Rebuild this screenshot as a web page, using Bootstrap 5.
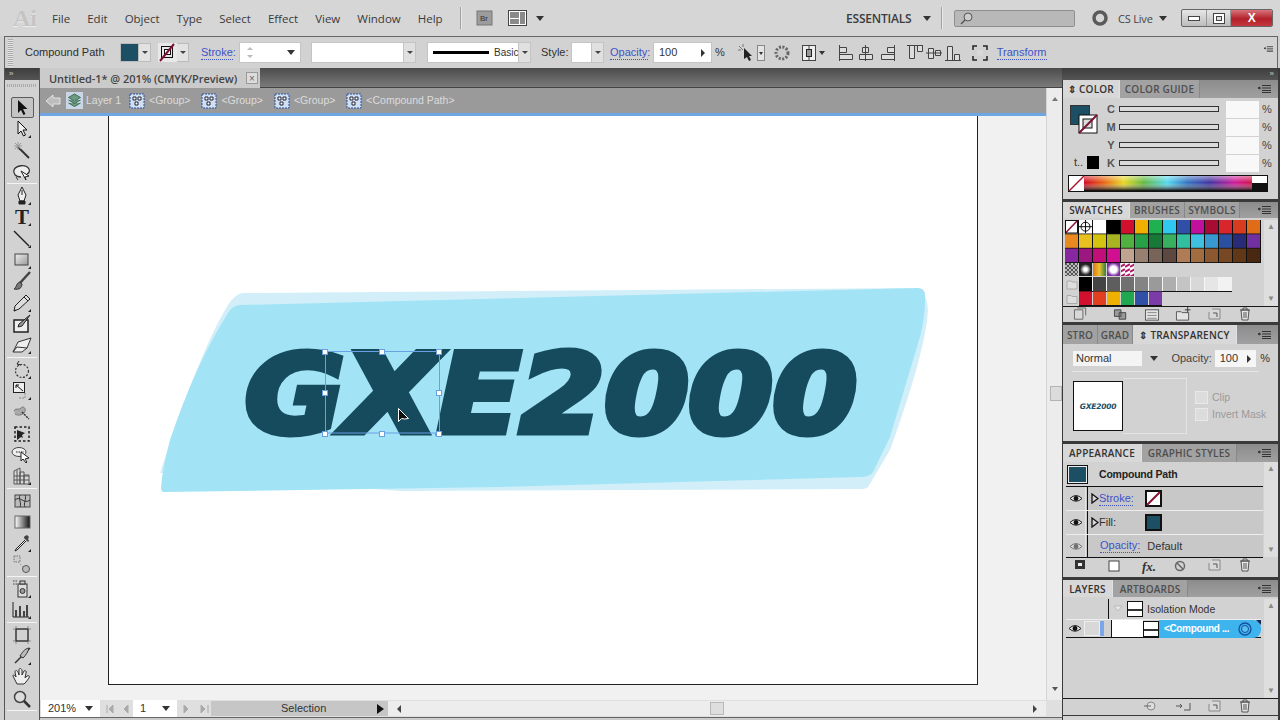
<!DOCTYPE html>
<html lang="en"><head><meta charset="utf-8"><title>Illustrator</title>
<link rel="stylesheet" href="https://cdn.jsdelivr.net/npm/bootstrap@5.3.0/dist/css/bootstrap.min.css">
<style>
html,body{margin:0;width:1280px;height:720px;overflow:hidden;background:#d0d0d0}
body{font:11px "Liberation Sans",sans-serif;color:#333;line-height:1}
svg{display:block;flex:none}
.app{width:1280px;height:720px}
.menubar{height:36px;background:#d6d6d6;padding:0 7px 0 0;flex:none}
.ailogo{font:700 24px "Liberation Serif",serif;color:#c4c4c4;width:52px;padding-left:13px;text-shadow:0 1px 0 #eee}
.mitem{font:11.5px "Open Sans",sans-serif;color:#3a3a3a;margin-right:17px}
.vsep{width:1px;height:22px;background:#a2a2a2;border-right:1px solid #e8e8e8;box-sizing:content-box}
.ess{font:600 12px "Open Sans",sans-serif;color:#3c3c3c;width:77px;white-space:nowrap;letter-spacing:-.2px}
.caret-d{width:0;height:0;border-left:4px solid transparent;border-right:4px solid transparent;border-top:5px solid #333;flex:none}
.srch{width:121px;height:17px;margin:0 17px 0 11px;background:#b8b8b8;border:1px solid #8e8e8e;border-radius:2px;padding-left:5px}
.cslive{font:11px "Open Sans",sans-serif;color:#444;margin:0 4px 0 10px;width:37px;white-space:nowrap;letter-spacing:-.2px}
.winbtns{width:92px;height:18px;margin-left:14px;border:1px solid #666;border-radius:2px;background:linear-gradient(#e6e6e6,#bcbcbc);overflow:hidden}
.wb{width:25px;height:100%;border-right:1px solid #999}
.wbx{width:41px;height:100%;background:linear-gradient(#d8737b,#b3212a 55%,#c4383f);color:#fff;font:700 12px "Liberation Sans",sans-serif}
.ctrlbar{height:32px;flex:none;margin:0 2px 0 4px;background:#d2d2d2;border:1px solid #666;border-width:1px 1px 0 1px;padding-left:3px}
.grip{width:5px;height:28px;background:repeating-linear-gradient(#aaa 0 1px,#e4e4e4 1px 2px)}
.cpath{margin-left:12px;width:95px;color:#2e2e2e}
.swfill{width:19px;height:19px;background:#1c4f63;border:1px solid #bcbcbc}
.swbtn{width:12px;height:19px;background:#e2e2e2;border:1px solid #bbb;border-left:0;margin-right:7px}
.mini-c{width:0;height:0;border-left:3px solid transparent;border-right:3px solid transparent;border-top:3px solid #444}
.lnk{color:#4053c8;border-bottom:1px dotted #4053c8;line-height:13px;white-space:nowrap}
.fld{height:21px;background:#fff;border:1px solid #c4c4c4;color:#333;padding:0 5px;flex:none}
.fldb{width:12px;height:100%;background:#e0e0e0;border-left:1px solid #c4c4c4;margin-left:auto;margin-right:-5px}
.f62{width:62px}.f105{width:105px}.f104{width:104px}.f33{width:33px}.f59{width:59px}.f44{width:44px}
.basic{font-size:10px;margin-left:5px}
.ctl-stroke{margin-left:5px;width:32px}.ctl-style{margin-left:10px;width:26px}.ctl-op{margin-left:6px;width:38px}
.ml3{margin-left:3px}.ml4{margin-left:4px}.ml5{margin-left:5px}.ml6{margin-left:6px}.ml8{margin-left:8px}.ml10{margin-left:10px}.ml11{margin-left:11px}.ml12{margin-left:12px}
.work{height:652px;min-height:0}
.toolcol{flex:none;background:#d2d2d2;border-left:1px solid #555;border-right:1px solid #555;margin-left:4px;width:36px}
.tophd{height:12px;background:linear-gradient(#3d3d3d,#555);color:#ccc;font-size:8px;padding:0 4px}
.tgrip{height:17px;padding:4px 2px 0}
.tgrip i{display:block;height:3px;background:repeating-linear-gradient(90deg,#aaa 0 1px,transparent 1px 2px)}
.tool{height:21.33px;width:100%}
.tact{width:23px;height:21px;border:1px solid #5c5c5c;border-radius:2px;background:#c4c4c4}
.tglyph{font:700 21px "Liberation Serif",serif;color:#222}
.tdiv{height:3px;padding-top:1px}
.tdiv i{display:block;height:1px;background:#f4f4f4;margin:0 2px}
.docarea{width:1022px;flex:none}
.tabrow{height:20px;background:linear-gradient(#4c4c4c,#7a7a7a);border-bottom:1px solid #444;flex:none}
.doctab{width:220px;height:20px;background:#cbcbcb;padding-left:9px;font:600 11px "Open Sans",sans-serif;color:#444;white-space:nowrap;letter-spacing:-.05px}
.docx{width:12px;height:12px;border:1px solid #999;margin-left:auto;margin-right:2px;color:#666;font:10px "Liberation Sans",sans-serif;background:#ddd}
.midrow{height:612px;flex:none}
.isobar{height:28px;background:#9a9a9a;border-bottom:3px solid #6ea6e4;color:#dcdcdc;padding-left:5px;flex:none;font-size:10.5px}
.crumb{margin-left:11px;white-space:nowrap}
.crumb svg{margin-right:4px}
.crumb1{margin-left:5px;width:52px;flex:none}
.crumb1 svg{margin-right:3px}
.canvasz{height:584px;background:#f1f1f1;flex:none}
.artb{width:870px;height:569px;margin-left:68px;background:#fff;border:1px solid #222;border-top:0}
.overlay{position:absolute;left:0;top:0}
.vscroll{width:16px;flex:none;background:#ececec;border-left:1px solid #d4d4d4}
.vthumb{width:12px;height:15px;margin:284px 0 0 2px;background:#dcdcdc;border:1px solid #b4b4b4}
.statusb{height:17px;background:#dfdfdf;flex:none}
.stf{height:17px;background:#fff;padding:0 7px;flex:none}
.stz{width:59px;margin-left:1px}.stp{width:44px;margin-left:1px}
.selbox{width:177px;height:15px;background:#c6c6c6;margin-left:1px;color:#333;padding-left:70px;flex:none}
.hbar{background:#ededed;height:15px;margin-right:16px}
.hthumb{width:14px;height:13px;background:#dedede;border:1px solid #b8b8b8}
.botline{height:3px;background:#cbcbcb;border-top:1px solid #666;flex:none}
.dock{width:218px;flex:none;background:#3a3a3a;padding-right:2px}
.dhead{height:12px;background:linear-gradient(#3d3d3d,#555);color:#ccc;font-size:8px;padding-right:4px;flex:none}
.dockend{flex:1;background:#d4d4d4;margin:1px 0 0 1px}
.pnl{background:#d2d2d2;margin-left:1px;flex:none;margin-bottom:3px;overflow:hidden}
.ptabs{background:linear-gradient(#8c8c8c,#a0a0a0);flex-wrap:nowrap;border:0;padding-right:7px}
.ptabs .nav-link{border:0;border-radius:0;padding:0;margin:0;height:100%;display:flex;align-items:center;justify-content:center;background:#a2a2a2;color:#4e4e4e;font:600 10px "Open Sans",sans-serif;letter-spacing:.2px;border-right:1px solid #888;white-space:nowrap;overflow:hidden}
.ptabs .nav-link.active{background:#d8d8d8;color:#333}
.h18{height:18px}.h16{height:16px}.h19{height:19px}.h17{height:17px}
.w57{width:57px}.w80{width:80px}.w67{width:67px}.w55{width:55px}.w35{width:35px}.w104{width:104px}.w79{width:79px}.w95{width:95px}.w50{width:50px}.w75{width:75px}
.pmenu{margin-left:auto}
.body-color{height:101px;padding:7px 0 0 7px;position:relative}
.cswatch{width:36px;height:64px;flex:none}
.kbox{width:12px;height:13px;background:#000;display:block}
.slcol{margin-top:-5px}
.sl{height:18px;color:#666;font-size:11px}
.sl b{font-weight:700;width:10px;margin-right:3px;text-align:center;color:#555}
.slbar{width:100px;height:6px;border:1px solid #333;background:#dadada}
.slin{width:33px;height:17px;background:#f8f8f8;margin:0 3px 0 7px}
.pct{color:#444}
.specbar{position:absolute;left:5px;top:77px}
.body-sw{height:88px;padding:2px 0 0 2px}
.sbar{width:14px;margin-left:auto;background:#dedede;color:#888;font-size:8px;padding:3px 0}
.pfoot{height:16px;border-top:1px solid #1a1a1a;padding:0;position:relative}
.pf19{height:19px;border-top:0}.pf17{height:17px}
.body-tr{height:97px;padding:6px 8px 0 10px}
.blend{width:74px;height:15px;background:#f4f4f4;padding-left:3px;color:#333}
.oplab{margin-left:13px;color:#444}
.trin{width:44px;height:17px;background:#f6f6f6;margin:0 4px 0 3px;padding-left:5px}
.trsep{height:1px;background:#e6e6e6;margin:4px 0 0 -1px;width:187px}
.trbox{margin-top:6px}
.thumbb{width:50px;height:50px;margin-top:3px;background:#fff;border:1px solid #111;color:#1c4f63;font:italic 800 7.5px "DejaVu Sans",sans-serif;letter-spacing:-.2px}
.maskb{width:64px;height:56px;border:1px solid #e4e4e4;border-left:0}
.ckcol{padding-top:13px;white-space:nowrap;color:#9a9a9a;font-size:10.500px}
.ckb{width:13px;height:13px;background:#dcdcdc;border:1px solid #e8e8e8}
.apprhead{height:25px;border-bottom:1px solid #111;width:197px;margin-left:3px;font-weight:700;font-size:10.5px;letter-spacing:-.2px;color:#222}
.apsw{width:21px;height:19px;background:#1c4f63;border:1px solid #111;outline:1px solid #eee;outline-offset:-2px;margin:0 11px 0 1px}
.aprow{height:24px;width:197px;margin-left:3px;background:#c8c8c8;border-bottom:1px solid #ededed}
.aprowl{height:23px;border-bottom:1px solid #111}
.eyec{width:20px;height:100%;border-right:1px solid #e4e4e4;background:#d0d0d0;margin-right:1px}
.aprule{width:1px;height:100%;background:#111}
.apbox{width:17px;height:17px;border:2px solid #111;background:#1c4f63}
.tri{width:8px;height:11px;margin:0 0 0 3px}
.aplab{width:34px;flex:none;margin:0 12px 0 0}
.aplab2{margin:0 7px 0 12px}
.aps{height:95px}
.dim{opacity:.5}
.body-lay{height:101px;padding-top:2px}
.lrow1{height:20px;margin-left:3px;width:195px;font-size:10.5px}
.lcolbar{display:block;width:43px;height:100%;border-right:1px solid #111}
.lrow2{height:19px;margin-left:3px;width:195px;border-top:1px solid #eee;border-bottom:1px solid #111}
.leye{width:18px}
.lvis{display:block;width:16px;height:15px;background:#d8d8d8;border:1px solid #eee}
.lblue{display:block;width:4px;height:15px;background:#7aa7ea;margin-right:4px}
.lrule{display:block;height:17px;border-left:1px solid #111;margin-left:3px}
.lwhite{display:block;width:31px;height:17px;background:#fff}
.lthumb{width:16px;height:16px;background:#fff;border:1px solid #111;position:relative;flex:none}
.lthumb i{position:absolute;left:0;right:0;top:7px;height:2px;background:#333}
.lsel{background:#3db4ee;color:#fff;font-weight:700;font-size:10px;letter-spacing:-.35px;border-radius:0 8px 8px 0;height:18px;position:relative;flex:1;padding-left:5px;white-space:nowrap}
.lsel:after{content:"";position:absolute;right:0;top:0;border-top:5px solid #1a2b52;border-left:5px solid transparent}
.ic{position:absolute;top:0}
.ring{margin-left:9px}
.p10{left:10px}.p11{left:11px}.p45{left:45px}.p50{left:50px}.p79{left:79px;top:1px;font:italic 700 13px "Liberation Serif",serif}.p80{left:80px}.p81{left:81px}.p110{left:110px}.p112{left:112px}.p144{left:144px}.p175{left:175px}
</style></head><body>
<svg width="0" height="0" class="position-absolute"><defs>
<symbol id="menu" viewBox="0 0 13 8"><path d="M0 3l2-1v2zM4 .5h9M4 3h9M4 5.500h9M4 7.500h9" stroke="#333" fill="#333"/></symbol>
<symbol id="grp" viewBox="0 0 16 16"><rect x="1" y="1" width="14" height="14" fill="#cfe0f4" stroke="#2d4f9e" stroke-dasharray="2 1"/><path d="M4 4h3v3H4zM9 4h3v3H9zM6 9h3v3H6z" fill="#fff" stroke="#223"/></symbol>
<symbol id="eye" viewBox="0 0 14 9"><path d="M1 4.500Q7-1.500 13 4.500 7 10 1 4.500z" fill="#e6e6e6" stroke="#222"/><circle cx="7" cy="4.500" r="2.400" fill="#111"/></symbol>
<symbol id="trash" viewBox="0 0 14 14"><path d="M3 3h8l-1 10H4zM2 3h10M5 3V1h4v2M6 5v6M8 5v6" fill="#e6e6e6" stroke="#555"/></symbol>
<symbol id="newi" viewBox="0 0 14 14"><path d="M5 2h8v10H2V5" fill="#d8d8d8" stroke="#888"/><path d="M6 6h4v4" fill="none" stroke="#555"/></symbol>
</defs></svg>
<div class="app d-flex flex-column">
 <nav class="menubar d-flex align-items-center">
  <span class="ailogo">Ai</span>
  <span class="mitem">File</span><span class="mitem">Edit</span><span class="mitem">Object</span><span class="mitem">Type</span><span class="mitem">Select</span><span class="mitem">Effect</span><span class="mitem">View</span><span class="mitem">Window</span><span class="mitem">Help</span>
  <span class="vsep"></span>
  <svg class="ml12" width="22" height="16" viewBox="0 0 22 16"><rect x="3" y="1" width="15" height="14" fill="#9c9c9c" stroke="#777"/><text x="6" y="11" font-family="Liberation Sans" font-size="8" fill="#333">Br</text></svg>
  <svg class="ml12" width="20" height="16" viewBox="0 0 20 16"><rect x=".5" y=".5" width="18" height="15" fill="#fff" stroke="#444"/><path d="M2 2h9v6H2zM12 2h5v12h-5zM2 9h9v5H2z" fill="#8a8a8a"/></svg>
  <span class="caret-d ml8"></span>
  <span class="flex-grow-1"></span>
  <span class="ess">ESSENTIALS</span><span class="caret-d"></span>
  <span class="vsep ml10"></span>
  <div class="srch d-flex align-items-center"><svg width="13" height="13" viewBox="0 0 13 13"><circle cx="8" cy="5" r="4" fill="#ccc" stroke="#555"/><path d="M5 8l-4 4" stroke="#555" stroke-width="1.500"/></svg></div>
  <svg width="16" height="16" viewBox="0 0 16 16"><circle cx="8" cy="8" r="6" fill="none" stroke="#5a5a5a" stroke-width="3.500"/></svg>
  <span class="cslive">CS Live</span><span class="caret-d"></span>
  <div class="winbtns d-flex">
   <div class="wb d-flex align-items-end justify-content-center pb-1"><svg width="12" height="6" viewBox="0 0 12 6"><rect x=".5" y=".5" width="11" height="4" fill="#fff" stroke="#444"/></svg></div>
   <div class="wb d-flex align-items-center justify-content-center"><svg width="12" height="11" viewBox="0 0 12 11"><rect x=".5" y=".5" width="11" height="10" fill="#fff" stroke="#444"/><rect x="3.500" y="3.500" width="5" height="4" fill="#ddd" stroke="#444"/></svg></div>
   <div class="wbx d-flex align-items-center justify-content-center">X</div>
  </div>
 </nav>
 <div class="ctrlbar d-flex align-items-center">
  <span class="grip"></span><span class="cpath">Compound Path</span>
  <span class="swfill"></span><span class="swbtn d-flex align-items-center justify-content-center"><i class="mini-c"></i></span>
  <svg width="19" height="19" viewBox="0 0 19 19"><rect width="19" height="19" fill="#e8e8e8"/><rect x="3.500" y="3.500" width="11" height="11" fill="none" stroke="#111"/><rect x="6.500" y="6.500" width="6" height="5" fill="#fff" stroke="#111"/><path d="M2 18L16 1" stroke="#7c1030" stroke-width="2"/></svg>
  <span class="swbtn d-flex align-items-center justify-content-center"><i class="mini-c"></i></span>
  <span class="lnk ctl-stroke">Stroke:</span>
  <div class="fld f62 d-flex align-items-center ml6"><svg width="10" height="17" viewBox="0 0 10 17"><path d="M5 3l3 3H2zM5 14l3-3H2z" fill="#bbb"/></svg><span class="caret-d ms-auto"></span></div>
  <div class="fld f105 d-flex align-items-center ml10"><span class="fldb d-flex align-items-center justify-content-center"><i class="mini-c"></i></span></div>
  <div class="fld f104 d-flex align-items-center ml11"><svg width="56" height="3"><rect width="56" height="3" fill="#000"/></svg><span class="basic">Basic</span><span class="fldb d-flex align-items-center justify-content-center"><i class="mini-c"></i></span></div>
  <span class="ctl-style">Style:</span>
  <div class="fld f33 d-flex align-items-center ml4"><span class="fldb d-flex align-items-center justify-content-center"><i class="mini-c"></i></span></div>
  <span class="lnk ctl-op">Opacity:</span>
  <div class="fld f59 d-flex align-items-center ml5">100<svg class="ms-auto" width="6" height="8" viewBox="0 0 6 8"><path d="M1 0l4 4-4 4z" fill="#333"/></svg></div>
  <span class="ml3">%</span>
  <svg class="ml12" width="30" height="20" viewBox="0 0 30 20"><path d="M2 3l4 4M6 1v3M1 7h3" stroke="#777"/><path d="M7 5v11l3-2 2 4 2-1-2-4h3z" fill="#222"/><rect x="20.500" y="2.500" width="7" height="15" fill="#e4e4e4" stroke="#888"/><path d="M22 9l2 3 2-3z" fill="#333"/></svg>
  <svg class="ml6" width="18" height="18" viewBox="0 0 18 18"><circle cx="9" cy="9" r="6" fill="#ccc" stroke="#666" stroke-width="3" stroke-dasharray="2 1.500"/></svg>
  <svg class="ml10" width="26" height="20" viewBox="0 0 26 20"><rect x="1.500" y="2.500" width="13" height="15" fill="#eee" stroke="#444"/><path d="M8 3v14" stroke="#444"/><rect x="5.500" y="6.500" width="5" height="7" fill="#999" stroke="#222"/><path d="M18 8h6l-3 4z" fill="#333"/></svg>
  <svg class="ml12" width="56" height="18" viewBox="0 0 56 18"><g fill="#ddd" stroke="#444"><path d="M.5 1v16M.5 3.500h7v5h-7zM.5 10.500h13v5H.5z"/><path d="M26.500 1v16M23.500 3.500h6v5h-6zM20.500 10.500h13v5h-13z"/><path d="M55.500 1v16M48.500 3.500h7v5h-7zM42.500 10.500h13v5h-13z"/></g></svg>
  <svg class="ml12" width="56" height="18" viewBox="0 0 56 18"><g fill="#ddd" stroke="#444"><path d="M0 1.500h16M2.500 1.500v13h5v-13zM10.500 1.500v6h5v-6z"/><path d="M19 9h16M21.500 4.500v10h5v-10zM28.500 6.500v5h5v-5z"/><path d="M38 16.500h16M40.500 2.500v14h5v-14zM47.500 10.500v6h5v-6z"/></g></svg>
  <svg class="ml8" width="18" height="18" viewBox="0 0 18 18"><path d="M2 6V2h4M12 2h4v4M16 12v4h-4M6 16H2v-4" fill="none" stroke="#222" stroke-width="1.500"/><path d="M5 5h8v8H5z" fill="#d8d8d8" stroke="#ccc"/></svg>
  <span class="lnk ms-2">Transform</span>
  <span class="ms-auto me-1 align-self-start mt-2"><svg width="9" height="8"><use href="#menu"/></svg></span>
 </div>
 <div class="work d-flex">
  <aside class="toolcol d-flex flex-column">
   <div class="tophd d-flex align-items-center">&#187;</div>
   <div class="tgrip"><i></i></div>
   <div class="tool d-flex align-items-center justify-content-center"><div class="tact d-flex align-items-center justify-content-center"><svg width="14" height="17" viewBox="0 0 14 17"><path d="M3 1v13l3-3 2.500 5 2-1-2.500-5h4.500z" fill="#111"/></svg></div></div>
   <div class="tool d-flex align-items-center justify-content-center"><svg width="20" height="20" viewBox="0 0 20 20"><path d="M6 2v13l3-3 2.500 5 2-1-2.500-5h4z" fill="#eee" stroke="#111"/><path d="M16 19h3v-3z" fill="#222"/></svg></div>
   <div class="tool d-flex align-items-center justify-content-center"><svg width="20" height="20" viewBox="0 0 20 20"><path d="M6 7l11 11" stroke="#333" stroke-width="2"/><path d="M6 2v8M2 6h8M3 3l6 6M9 3L3 9" stroke="#999"/></svg></div>
   <div class="tool d-flex align-items-center justify-content-center"><svg width="20" height="20" viewBox="0 0 20 20"><path d="M9 15C3 15 1 11 2 8c2-5 12-6 15-1 1 2 0 4-2 5" fill="#eee" stroke="#333" stroke-width="1.300"/><path d="M9 9l8 5-4 1 1 3z" fill="#fff" stroke="#222"/><path d="M4 15l2 3" stroke="#333"/></svg></div>
   <div class="tdiv"><i></i></div>
   <div class="tool d-flex align-items-center justify-content-center"><svg width="20" height="20" viewBox="0 0 20 20"><path d="M10 1l4 8-2 6H8L6 9z" fill="#eee" stroke="#222"/><path d="M10 4v5M7 15h6v3H7z" fill="#222" stroke="#222"/><path d="M16 19h3v-3z" fill="#222"/></svg></div>
   <div class="tool d-flex align-items-center justify-content-center position-relative"><span class="tglyph">T</span><svg class="position-absolute" width="20" height="20" viewBox="0 0 20 20"><path d="M16 19h3v-3z" fill="#222"/></svg></div>
   <div class="tool d-flex align-items-center justify-content-center"><svg width="20" height="20" viewBox="0 0 20 20"><path d="M2 2l15 15" stroke="#222" stroke-width="1.400"/><path d="M16 19h3v-3z" fill="#222"/></svg></div>
   <div class="tool d-flex align-items-center justify-content-center"><svg width="20" height="20" viewBox="0 0 20 20"><defs><linearGradient id="g1" x1="0" y1="0" x2="1" y2="1"><stop offset="0" stop-color="#eee"/><stop offset="1" stop-color="#999"/></linearGradient></defs><rect x="3" y="4" width="13" height="11" fill="url(#g1)" stroke="#444"/><path d="M16 19h3v-3z" fill="#222"/></svg></div>
   <div class="tool d-flex align-items-center justify-content-center"><svg width="20" height="20" viewBox="0 0 20 20"><path d="M18 1L8 12" stroke="#444" stroke-width="2.500"/><path d="M8 11c-4 1-3 5-6 7 5 1 8-1 8-5z" fill="#777" stroke="#333"/></svg></div>
   <div class="tool d-flex align-items-center justify-content-center"><svg width="20" height="20" viewBox="0 0 20 20"><path d="M14 2l4 4L7 16l-5 2 1-5z" fill="#ddd" stroke="#222"/><path d="M12 4l4 4M2 18l2-1" stroke="#222"/><path d="M16 19h3v-3z" fill="#222"/></svg></div>
   <div class="tool d-flex align-items-center justify-content-center"><svg width="20" height="20" viewBox="0 0 20 20"><rect x="2" y="6" width="14" height="12" fill="#eee" stroke="#222" stroke-width="1.500"/><path d="M18 1L7 10l-1 3 4-1z" fill="#999" stroke="#222"/></svg></div>
   <div class="tool d-flex align-items-center justify-content-center"><svg width="20" height="20" viewBox="0 0 20 20"><path d="M1 17L6 7 19 3l-4 10-5 4z" fill="#eee" stroke="#333"/><path d="M1 17l4-5 10 1" fill="none" stroke="#333"/><path d="M16 19h3v-3z" fill="#222"/></svg></div>
   <div class="tdiv"><i></i></div>
   <div class="tool d-flex align-items-center justify-content-center"><svg width="20" height="20" viewBox="0 0 20 20"><circle cx="10" cy="11" r="6.500" fill="none" stroke="#333" stroke-width="1.200" stroke-dasharray="2 1.500"/><path d="M7 1L5 4l4 1" fill="none" stroke="#222"/><path d="M16 19h3v-3z" fill="#222"/></svg></div>
   <div class="tool d-flex align-items-center justify-content-center"><svg width="20" height="20" viewBox="0 0 20 20"><rect x="1.500" y="1.500" width="11" height="10" fill="#eee" stroke="#222"/><path d="M4 4l7 6M4 4h3M4 4v3" stroke="#111" fill="none"/><path d="M13 12v5H7" fill="none" stroke="#888" stroke-dasharray="2 1"/><path d="M16 19h3v-3z" fill="#222"/></svg></div>
   <div class="tool d-flex align-items-center justify-content-center"><svg width="20" height="20" viewBox="0 0 20 20"><path d="M2 9c2-4 4 0 7-3 3-3 6 2 3 5-2 2-6 3-9 1" fill="#aaa" stroke="#777"/><path d="M10 10l7 7" stroke="#333" stroke-width="1.500" stroke-dasharray="2 1"/></svg></div>
   <div class="tool d-flex align-items-center justify-content-center"><svg width="20" height="20" viewBox="0 0 20 20"><rect x="3" y="3" width="14" height="14" fill="none" stroke="#222" stroke-width="1.500" stroke-dasharray="2.500 2"/><path d="M5 6v10l4-3 2 1-1-3 3-2z" fill="#222"/></svg></div>
   <div class="tool d-flex align-items-center justify-content-center"><svg width="22" height="20" viewBox="0 0 22 20"><ellipse cx="8" cy="7" rx="7" ry="4.500" fill="#eee" stroke="#444"/><path d="M5 7h8" stroke="#222" stroke-dasharray="1.500 1"/><path d="M10 7v9l2-2 3 4 1-1-2-3 4-1z" fill="#fff" stroke="#222"/></svg></div>
   <div class="tool d-flex align-items-center justify-content-center"><svg width="20" height="20" viewBox="0 0 20 20"><path d="M2 5l6-3v16H2zM8 6h4v12H8zM12 9h5v9h-5zM2 10h15M2 14h15M5 4v14" fill="#d8d8d8" stroke="#555"/><path d="M16 19h3v-3z" fill="#222"/></svg></div>
   <div class="tdiv"><i></i></div>
   <div class="tool d-flex align-items-center justify-content-center"><svg width="20" height="20" viewBox="0 0 20 20"><rect x="3" y="4" width="15" height="12" fill="#bbb" stroke="#444"/><path d="M3 9c5-5 9 5 15 0M8 4c-2 4 2 8 0 12M13 4c2 4-2 8 0 12" fill="none" stroke="#333"/></svg></div>
   <div class="tool d-flex align-items-center justify-content-center"><svg width="20" height="20" viewBox="0 0 20 20"><defs><linearGradient id="g2"><stop offset="0" stop-color="#fff"/><stop offset="1" stop-color="#111"/></linearGradient></defs><rect x="3" y="4" width="15" height="12" fill="url(#g2)" stroke="#666"/></svg></div>
   <div class="tool d-flex align-items-center justify-content-center"><svg width="20" height="20" viewBox="0 0 20 20"><path d="M13 7L4 16l-1 2 2-1 9-9" fill="#eee" stroke="#222"/><path d="M12 5l4 4 1-1-1-2 1-2-2-2-2 1-1 1z" fill="#444"/><path d="M16 19h3v-3z" fill="#222"/></svg></div>
   <div class="tool d-flex align-items-center justify-content-center"><svg width="20" height="20" viewBox="0 0 20 20"><rect x="2" y="1" width="6" height="6" fill="#ccc" stroke="#777" stroke-dasharray="1.500 1"/><path d="M6 7l5 5" stroke="#999" stroke-dasharray="1.500 1.500"/><circle cx="14" cy="14" r="3.500" fill="#bbb" stroke="#555"/></svg></div>
   <div class="tdiv"><i></i></div>
   <div class="tool d-flex align-items-center justify-content-center"><svg width="20" height="20" viewBox="0 0 20 20"><path d="M1 2h5M1 5h5" stroke="#444" stroke-dasharray="1.500 1"/><rect x="6" y="5" width="9" height="13" fill="#ddd" stroke="#333"/><circle cx="10.500" cy="12" r="2.500" fill="#999" stroke="#333"/><rect x="8" y="2" width="5" height="3" fill="#ccc" stroke="#333"/><path d="M16 19h3v-3z" fill="#222"/></svg></div>
   <div class="tool d-flex align-items-center justify-content-center"><svg width="20" height="20" viewBox="0 0 20 20"><path d="M1 2v15h16" fill="none" stroke="#222"/><path d="M3 10h2v7H3zM7 6h2v11H7zM11 11h2v6h-2zM14 5h2v12h-2z" fill="#444"/><path d="M16 19h3v-3z" fill="#222"/></svg></div>
   <div class="tdiv"><i></i></div>
   <div class="tool d-flex align-items-center justify-content-center"><svg width="20" height="20" viewBox="0 0 20 20"><rect x="4" y="4" width="12" height="12" fill="none" stroke="#222" stroke-width="1.300"/><path d="M1 4h2M1 16h2M17 4h2M17 16h2M4 1v2M16 1v2M4 17v2M16 17v2" stroke="#888"/></svg></div>
   <div class="tool d-flex align-items-center justify-content-center"><svg width="20" height="20" viewBox="0 0 20 20"><path d="M18 2L3 17" stroke="#333" stroke-width="1.500"/><path d="M17 2c-5 1-7 5-9 8l3 2c3-3 5-6 6-10z" fill="#bbb" stroke="#333"/><path d="M16 19h3v-3z" fill="#222"/></svg></div>
   <div class="tool d-flex align-items-center justify-content-center"><svg width="20" height="20" viewBox="0 0 20 20"><path d="M5 17L1 9c0-2 2-1 3 1L3 5c0-2 2-2 3 0l1 3V3c0-2 2-2 3 0v5l2-4c1-1 3 0 2 2l-1 5 2-2c2-1 3 0 2 2l-3 4-2 2z" fill="#eee" stroke="#333"/></svg></div>
   <div class="tool d-flex align-items-center justify-content-center"><svg width="20" height="20" viewBox="0 0 20 20"><circle cx="8" cy="8" r="5.500" fill="#ddd" stroke="#444" stroke-width="1.500"/><path d="M12 12l6 6" stroke="#333" stroke-width="2.500"/></svg></div>
   <div class="tdiv"><i></i></div>
  </aside>
  <div class="docarea d-flex flex-column">
   <div class="tabrow d-flex"><div class="doctab d-flex align-items-center">Untitled-1* @ 201% (CMYK/Preview)<span class="docx d-flex align-items-center justify-content-center">&#215;</span></div></div>
   <div class="midrow d-flex">
    <main class="flex-grow-1 d-flex flex-column">
     <div class="isobar d-flex align-items-center">
      <svg width="16" height="14" viewBox="0 0 16 14"><path d="M1 7l7-6v3h7v6H8v3z" fill="#bdbdbd" stroke="#e2e2e2"/></svg>
      <span class="crumb crumb1 d-flex align-items-center"><svg width="17" height="17" viewBox="0 0 17 17"><rect width="17" height="17" fill="#c8d6e6"/><path d="M8.500 2l6 3.500-6 3.500-6-3.500zM2.500 8l6 3.500 6-3.500M2.500 11l6 3.500 6-3.500" fill="#6d9a80" stroke="#3e6a56"/></svg>Layer 1</span>
      <span class="crumb d-flex align-items-center"><svg width="16" height="16"><use href="#grp"/></svg>&lt;Group&gt;</span>
      <span class="crumb d-flex align-items-center"><svg width="16" height="16"><use href="#grp"/></svg>&lt;Group&gt;</span>
      <span class="crumb d-flex align-items-center"><svg width="16" height="16"><use href="#grp"/></svg>&lt;Group&gt;</span>
      <span class="crumb d-flex align-items-center"><svg width="16" height="16"><use href="#grp"/></svg>&lt;Compound Path&gt;</span>
     </div>
     <div class="canvasz position-relative">
      <div class="artb"></div>
      <svg class="overlay" width="1006" height="584" viewBox="40 116 1006 584">
       <path d="M243 293L915 288Q926 288 928 310Q926 350 890 450L868 487Q866 489 860 489L400 491L160 473Q200 350 228 305Q236 293 243 293z" fill="#d2eff9"/>
       <path d="M240 305L918 288Q924 288 925 294Q926 320 917 347L890 437L873 472Q870 477 860 477L500 487L164 492Q161 492 161 488Q162 470 170 440Q195 365 228 313Q233 305 240 305z" fill="#a2e4f6"/>
       <text x="245" y="431.500" font-family="DejaVu Sans" font-weight="700" font-style="italic" font-size="108" textLength="612" lengthAdjust="spacingAndGlyphs" fill="#154b5d" stroke="#154b5d" stroke-width="7">GXE2000</text>
       <path d="M325.500 351.500H439.500V433H325.500z" fill="none" stroke="#6a9fe4"/>
       <g fill="#fff" stroke="#6a9fe4"><rect x="322.500" y="349.500" width="5" height="5"/><rect x="379.500" y="349.500" width="5" height="5"/><rect x="436.500" y="349.500" width="5" height="5"/><rect x="322.500" y="390.500" width="5" height="5"/><rect x="436.500" y="390.500" width="5" height="5"/><rect x="322.500" y="431.500" width="5" height="5"/><rect x="379.500" y="431.500" width="5" height="5"/><rect x="436.500" y="431.500" width="5" height="5"/></g>
       <path d="M398.500 408.500v13l3-3 3 .5 4-.5z" fill="#111" stroke="#fff"/>
      </svg>
     </div>
    </main>
    <div class="vscroll d-flex flex-column align-items-center">
     <svg class="mt-2" width="8" height="6" viewBox="0 0 8 6"><path d="M4 1l3 4H1z" fill="#777"/></svg>
     <div class="vthumb"></div>
     <svg class="mt-auto mb-2" width="8" height="6" viewBox="0 0 8 6"><path d="M4 5L1 1h6z" fill="#555"/></svg>
    </div>
   </div>
   <div class="statusb d-flex align-items-center">
    <div class="stf stz d-flex align-items-center">201%<span class="caret-d ms-auto"></span></div>
    <svg class="ml6" width="26" height="10" viewBox="0 0 26 10"><path d="M1 1v8M7 1L3 5l4 4zM22 1l-4 4 4 4z" fill="#aaa" stroke="#aaa"/></svg>
    <div class="stf stp d-flex align-items-center">1<span class="caret-d ms-auto"></span></div>
    <svg class="ml5" width="28" height="10" viewBox="0 0 28 10"><path d="M2 1l4 4-4 4zM19 1l4 4-4 4zM26 1v8" fill="#aaa" stroke="#aaa"/></svg>
    <div class="selbox d-flex align-items-center">Selection<svg class="ms-auto me-1" width="7" height="10" viewBox="0 0 7 10"><path d="M0 0l7 5-7 5z" fill="#111"/></svg></div>
    <div class="hbar flex-grow-1 d-flex align-items-center justify-content-between px-2">
     <svg width="6" height="8" viewBox="0 0 6 8"><path d="M5 0L1 4l4 4z" fill="#444"/></svg>
     <div class="hthumb"></div>
     <svg width="6" height="8" viewBox="0 0 6 8"><path d="M1 0l4 4-4 4z" fill="#444"/></svg>
    </div>
   </div>
   <div class="botline"></div>
  </div>
  <aside class="dock d-flex flex-column">
   <div class="dhead d-flex align-items-center justify-content-end">&#187;</div>
   <section class="pnl">
    <ul class="nav nav-tabs ptabs h18"><li class="nav-item"><a class="nav-link active w57">&#8661; COLOR</a></li><li class="nav-item"><a class="nav-link w80">COLOR GUIDE</a></li><li class="pmenu d-flex align-items-center"><svg width="13" height="8"><use href="#menu"/></svg></li></ul>
    <div class="body-color d-flex">
     <div class="cswatch d-flex flex-column">
      <svg width="30" height="30" viewBox="0 0 30 30"><rect x=".5" y=".5" width="19" height="19" fill="#1c4f63" stroke="#333"/><rect x="9" y="10" width="18" height="18" fill="#fff" stroke="#111"/><rect x="13" y="14" width="9" height="9" fill="#ddd" stroke="#111"/><path d="M9 28L27 10" stroke="#7c1030" stroke-width="2"/></svg>
      <div class="d-flex align-items-center mt-auto"><span class="ml4 me-1">t..</span><span class="kbox"></span></div>
     </div>
     <div class="slcol flex-grow-1">
      <div class="sl d-flex align-items-center"><b>C</b><span class="slbar"></span><span class="slin"></span><span class="pct">%</span></div>
      <div class="sl d-flex align-items-center"><b>M</b><span class="slbar"></span><span class="slin"></span><span class="pct">%</span></div>
      <div class="sl d-flex align-items-center"><b>Y</b><span class="slbar"></span><span class="slin"></span><span class="pct">%</span></div>
      <div class="sl d-flex align-items-center"><b>K</b><span class="slbar"></span><span class="slin"></span><span class="pct">%</span></div>
     </div>
     <svg class="specbar" width="200" height="17" viewBox="0 0 200 17"><defs><linearGradient id="hue"><stop offset="0" stop-color="#d00020"/><stop offset=".12" stop-color="#e86010"/><stop offset=".24" stop-color="#e8d820"/><stop offset=".36" stop-color="#60b840"/><stop offset=".5" stop-color="#50d8f0"/><stop offset=".62" stop-color="#3070c0"/><stop offset=".75" stop-color="#4030a0"/><stop offset=".9" stop-color="#d01898"/><stop offset="1" stop-color="#d01040"/></linearGradient><linearGradient id="shade" x1="0" y1="0" x2="0" y2="1"><stop offset="0" stop-color="#fff" stop-opacity=".5"/><stop offset=".45" stop-color="#fff" stop-opacity="0"/><stop offset="1" stop-color="#000"/></linearGradient></defs><rect width="200" height="17" fill="#111"/><rect x="15" y="1" width="169" height="15" fill="url(#hue)"/><rect x="15" y="1" width="169" height="15" fill="url(#shade)"/><rect x="184" y="1" width="15" height="7" fill="#fff"/><rect x="1" y="1" width="15" height="15" fill="#fff"/><path d="M1 16L16 1" stroke="#b01030" stroke-width="1.500"/></svg>
    </div>
   </section>
   <section class="pnl">
    <ul class="nav nav-tabs ptabs h16"><li class="nav-item"><a class="nav-link active w67">SWATCHES</a></li><li class="nav-item"><a class="nav-link w55">BRUSHES</a></li><li class="nav-item"><a class="nav-link w55">SYMBOLS</a></li><li class="pmenu d-flex align-items-center"><svg width="13" height="8"><use href="#menu"/></svg></li></ul>
    <div class="body-sw d-flex">
     <svg width="196" height="86" viewBox="0 0 196 86">
      <rect width="196" height="43" fill="#111"/>
      <g><rect width="13" height="13.500" fill="#fff"/><path d="M0 13.500L13 0" stroke="#8a1030" stroke-width="1.500"/><rect x=".5" y=".5" width="12" height="12.500" fill="none" stroke="#111"/><rect x="14" width="13" height="13.500" fill="#fff"/><circle cx="20.500" cy="6.700" r="4.500" fill="none" stroke="#111"/><path d="M20.500 0v13M14 6.700h13" stroke="#111"/><rect x="28" width="13" height="13.500" fill="#fff"/><rect x="42" width="13" height="13.500" fill="#000"/><rect x="56" width="13" height="13.500" fill="#d0102c"/><rect x="70" width="13" height="13.500" fill="#f0b000"/><rect x="84" width="13" height="13.500" fill="#20b050"/><rect x="98" width="13" height="13.500" fill="#30c8f0"/><rect x="112" width="13" height="13.500" fill="#3050a8"/><rect x="126" width="13" height="13.500" fill="#c0109c"/><rect x="140" width="13" height="13.500" fill="#a80c34"/><rect x="154" width="13" height="13.500" fill="#d8262c"/><rect x="168" width="13" height="13.500" fill="#d83c20"/><rect x="182" width="13" height="13.500" fill="#e06c18"/></g>
      <g transform="translate(0,14.300)"><rect width="13" height="13.500" fill="#e88a20"/><rect x="14" width="13" height="13.500" fill="#e8c020"/><rect x="28" width="13" height="13.500" fill="#d4c410"/><rect x="42" width="13" height="13.500" fill="#a8b420"/><rect x="56" width="13" height="13.500" fill="#50b040"/><rect x="70" width="13" height="13.500" fill="#28a048"/><rect x="84" width="13" height="13.500" fill="#187838"/><rect x="98" width="13" height="13.500" fill="#38b060"/><rect x="112" width="13" height="13.500" fill="#30c0a0"/><rect x="126" width="13" height="13.500" fill="#40c0e0"/><rect x="140" width="13" height="13.500" fill="#3898d0"/><rect x="154" width="13" height="13.500" fill="#2c50a0"/><rect x="168" width="13" height="13.500" fill="#282c78"/><rect x="182" width="13" height="13.500" fill="#7030a0"/></g>
      <g transform="translate(0,28.600)"><rect width="13" height="13.500" fill="#8828a0"/><rect x="14" width="13" height="13.500" fill="#9c1880"/><rect x="28" width="13" height="13.500" fill="#c01078"/><rect x="42" width="13" height="13.500" fill="#d01090"/><rect x="56" width="13" height="13.500" fill="#c0a490"/><rect x="70" width="13" height="13.500" fill="#988070"/><rect x="84" width="13" height="13.500" fill="#786458"/><rect x="98" width="13" height="13.500" fill="#5c4840"/><rect x="112" width="13" height="13.500" fill="#b07c58"/><rect x="126" width="13" height="13.500" fill="#a06c40"/><rect x="140" width="13" height="13.500" fill="#8c5830"/><rect x="154" width="13" height="13.500" fill="#784824"/><rect x="168" width="13" height="13.500" fill="#603818"/><rect x="182" width="13" height="13.500" fill="#482810"/></g>
      <g transform="translate(0,43)"><defs><radialGradient id="rw"><stop offset=".3" stop-color="#fff"/><stop offset="1" stop-color="#222"/></radialGradient><radialGradient id="rv"><stop offset=".5" stop-color="#fff"/><stop offset="1" stop-color="#7a2ca0"/></radialGradient><linearGradient id="ro"><stop offset="0" stop-color="#e07810"/><stop offset=".5" stop-color="#e8c030"/><stop offset="1" stop-color="#308040"/></linearGradient><pattern id="chk" width="4" height="4" patternUnits="userSpaceOnUse"><rect width="4" height="4" fill="#bbb"/><rect width="2" height="2" fill="#555"/><rect x="2" y="2" width="2" height="2" fill="#555"/></pattern><pattern id="pk" width="5" height="5" patternUnits="userSpaceOnUse"><rect width="5" height="5" fill="#fff"/><path d="M0 4L5 1" stroke="#b01868" stroke-width="2"/></pattern></defs><rect width="13" height="13" fill="url(#chk)"/><rect x="14" width="13" height="13" fill="#222"/><circle cx="20.500" cy="6.500" r="5.500" fill="url(#rw)"/><rect x="28" width="13" height="13" fill="url(#ro)"/><rect x="42" width="13" height="13" fill="url(#rv)"/><rect x="56" width="13" height="13" fill="url(#pk)"/></g>
      <g transform="translate(0,57)"><path d="M2 12V4h4l1 1h5v7z" fill="#ddd" stroke="#aaa"/><rect x="14" width="153" height="14" fill="#f4f4f4"/><rect x="14" width="13" height="14" fill="#000"/><rect x="28" width="13" height="14" fill="#444"/><rect x="42" width="13" height="14" fill="#5e5e5e"/><rect x="56" width="13" height="14" fill="#707070"/><rect x="70" width="13" height="14" fill="#848484"/><rect x="84" width="13" height="14" fill="#9a9a9a"/><rect x="98" width="13" height="14" fill="#aeaeae"/><rect x="112" width="13" height="14" fill="#c4c4c4"/><rect x="126" width="13" height="14" fill="#d8d8d8"/><rect x="140" width="13" height="14" fill="#e6e6e6"/><rect x="154" width="13" height="14" fill="#f2f2f2"/><rect x="14" y="14" width="153" height="1" fill="#111"/></g>
      <g transform="translate(0,71.500)"><path d="M2 12V4h4l1 1h5v7z" fill="#ddd" stroke="#aaa"/><rect x="14" width="13" height="13.500" fill="#d0102c"/><rect x="28" width="13" height="13.500" fill="#e04020"/><rect x="42" width="13" height="13.500" fill="#f0b000"/><rect x="56" width="13" height="13.500" fill="#20a850"/><rect x="70" width="13" height="13.500" fill="#3050a8"/><rect x="84" width="13" height="13.500" fill="#7c3ca8"/><rect x="14" y="13.500" width="83" height="1" fill="#111"/></g>
     </svg>
     <div class="sbar d-flex flex-column align-items-center justify-content-between">&#9650;<span>&#9660;</span></div>
    </div>
    <div class="pfoot">
     <svg class="ic p10" width="16" height="15" viewBox="0 0 16 16"><path d="M1 3h9v10H1z" fill="#d8d8d8" stroke="#666"/><path d="M4 1h9v8" fill="none" stroke="#666"/></svg>
     <svg class="ic p50" width="16" height="15" viewBox="0 0 16 16"><path d="M1 3h7v7H1zM6 6h7v7H6z" fill="#999" stroke="#444"/></svg>
     <svg class="ic p81" width="16" height="15" viewBox="0 0 16 16"><rect x="1" y="3" width="14" height="11" fill="#e4e4e4" stroke="#555"/><path d="M3 6h10M3 9h10M3 12h10" stroke="#888"/></svg>
     <svg class="ic p112" width="16" height="15" viewBox="0 0 16 16"><path d="M1 5h5l1 1h7v8H1z" fill="#e4e4e4" stroke="#555"/><path d="M13 0v6M10 3h6" stroke="#333"/></svg>
     <svg class="ic p144" width="14" height="14"><use href="#newi"/></svg>
     <svg class="ic p175" width="14" height="14"><use href="#trash"/></svg>
    </div>
   </section>
   <section class="pnl">
    <ul class="nav nav-tabs ptabs h19"><li class="nav-item"><a class="nav-link w35">STRO</a></li><li class="nav-item"><a class="nav-link w35">GRAD</a></li><li class="nav-item"><a class="nav-link active w104">&#8661; TRANSPARENCY</a></li><li class="pmenu d-flex align-items-center"><svg width="13" height="8"><use href="#menu"/></svg></li></ul>
    <div class="body-tr">
     <div class="d-flex align-items-center">
      <span class="blend d-flex align-items-center">Normal</span><span class="caret-d ms-2"></span><span class="oplab">Opacity:</span><span class="trin d-flex align-items-center">100<svg class="ms-auto me-1" width="5" height="8" viewBox="0 0 5 8"><path d="M0 0l4 4-4 4z" fill="#333"/></svg></span><span>%</span>
     </div>
     <div class="trsep"></div>
     <div class="trbox d-flex">
      <div class="thumbb d-flex align-items-center justify-content-center">GXE2000</div>
      <div class="maskb me-2"></div>
      <div class="ckcol d-flex flex-column gap-1">
       <div class="d-flex align-items-center gap-1"><span class="ckb"></span>Clip</div>
       <div class="d-flex align-items-center gap-1"><span class="ckb"></span>Invert Mask</div>
      </div>
     </div>
    </div>
   </section>
   <section class="pnl">
    <ul class="nav nav-tabs ptabs h18"><li class="nav-item"><a class="nav-link active w79">APPEARANCE</a></li><li class="nav-item"><a class="nav-link w95">GRAPHIC STYLES</a></li><li class="pmenu d-flex align-items-center"><svg width="13" height="8"><use href="#menu"/></svg></li></ul>
    <div class="d-flex">
     <div>
      <div class="apprhead d-flex align-items-center"><span class="apsw"></span>Compound Path</div>
      <div class="aprow d-flex align-items-center"><span class="eyec d-flex align-items-center justify-content-center"><svg width="14" height="9"><use href="#eye"/></svg></span><span class="aprule"></span><svg class="tri" viewBox="0 0 8 11"><path d="M1 1l6 4.500-6 4.500z" fill="#d8d8d8" stroke="#111" stroke-width="1.300"/></svg><span class="lnk aplab">Stroke:</span><svg width="17" height="17" viewBox="0 0 17 17"><rect x="1" y="1" width="15" height="15" fill="#fff" stroke="#111" stroke-width="2"/><path d="M2 15L15 2" stroke="#8a1030" stroke-width="2"/></svg></div>
      <div class="aprow d-flex align-items-center"><span class="eyec d-flex align-items-center justify-content-center"><svg width="14" height="9"><use href="#eye"/></svg></span><span class="aprule"></span><svg class="tri" viewBox="0 0 8 11"><path d="M1 1l6 4.500-6 4.500z" fill="#d8d8d8" stroke="#111" stroke-width="1.300"/></svg><span class="aplab">Fill:</span><span class="apbox"></span></div>
      <div class="aprow aprowl d-flex align-items-center"><span class="eyec d-flex align-items-center justify-content-center"><svg class="dim" width="14" height="9"><use href="#eye"/></svg></span><span class="aprule"></span><span class="lnk aplab2">Opacity:</span><span>Default</span></div>
     </div>
     <div class="sbar aps d-flex flex-column align-items-center justify-content-between">&#9650;<span>&#9660;</span></div>
    </div>
    <div class="pfoot pf19">
     <svg class="ic p11" width="12" height="12" viewBox="0 0 12 12"><rect x="1" y="2" width="10" height="9" fill="#333"/><rect x="4" y="5" width="4" height="3" fill="#eee"/></svg>
     <svg class="ic p45" width="12" height="14" viewBox="0 0 12 14"><rect x="1" y="3" width="10" height="10" fill="#fff" stroke="#444"/></svg>
     <span class="ic p79">fx.</span>
     <svg class="ic p110" width="14" height="14" viewBox="0 0 14 14"><circle cx="7" cy="8" r="4.500" fill="none" stroke="#666" stroke-width="1.500"/><path d="M4 5l6 6" stroke="#666" stroke-width="1.500"/></svg>
     <svg class="ic p144" width="14" height="14"><use href="#newi"/></svg>
     <svg class="ic p175" width="14" height="14"><use href="#trash"/></svg>
    </div>
   </section>
   <section class="pnl mb-0">
    <ul class="nav nav-tabs ptabs h17"><li class="nav-item"><a class="nav-link active w50">LAYERS</a></li><li class="nav-item"><a class="nav-link w75">ARTBOARDS</a></li><li class="pmenu d-flex align-items-center"><svg width="13" height="8"><use href="#menu"/></svg></li></ul>
    <div class="d-flex body-lay">
     <div>
      <div class="lrow1 d-flex align-items-center"><span class="lcolbar"></span><svg class="mx-1" width="10" height="8" viewBox="0 0 10 8"><path d="M1 1h8L5 6z" fill="#e8e8e8" stroke="#bbb"/></svg><span class="lthumb me-1"><i></i></span><span>Isolation Mode</span></div>
      <div class="lrow2 d-flex align-items-center"><span class="leye d-flex align-items-center justify-content-center"><svg width="14" height="9"><use href="#eye"/></svg></span><span class="lvis"></span><span class="lblue"></span><span class="lrule"></span><span class="lwhite"></span><span class="lthumb"><i></i></span><span class="lsel d-flex align-items-center">&lt;Compound ...<svg class="ring" width="14" height="14" viewBox="0 0 14 14"><circle cx="7" cy="7" r="6" fill="none" stroke="#174f9c" stroke-width="1.300"/><circle cx="7" cy="7" r="3.500" fill="#5cc0f0" stroke="#174f9c"/></svg></span></div>
      <div class="lrow1"></div>
     </div>
     <div class="sbar d-flex flex-column align-items-center justify-content-between">&#9650;<span>&#9660;</span></div>
    </div>
    <div class="pfoot pf17">
     <svg class="ic p80" width="14" height="14" viewBox="0 0 14 14"><circle cx="8" cy="7" r="4" fill="#ddd" stroke="#888"/><path d="M1 7h7" stroke="#666"/></svg>
     <svg class="ic p112" width="16" height="14" viewBox="0 0 16 14"><path d="M1 7h6M5 5l2 2-2 2M9 11h6V4" fill="none" stroke="#555"/></svg>
     <svg class="ic p144" width="14" height="14"><use href="#newi"/></svg>
     <svg class="ic p175" width="14" height="14"><use href="#trash"/></svg>
    </div>
   </section>
   <div class="dockend"></div>
  </aside>
 </div>
</div>
</body></html>
